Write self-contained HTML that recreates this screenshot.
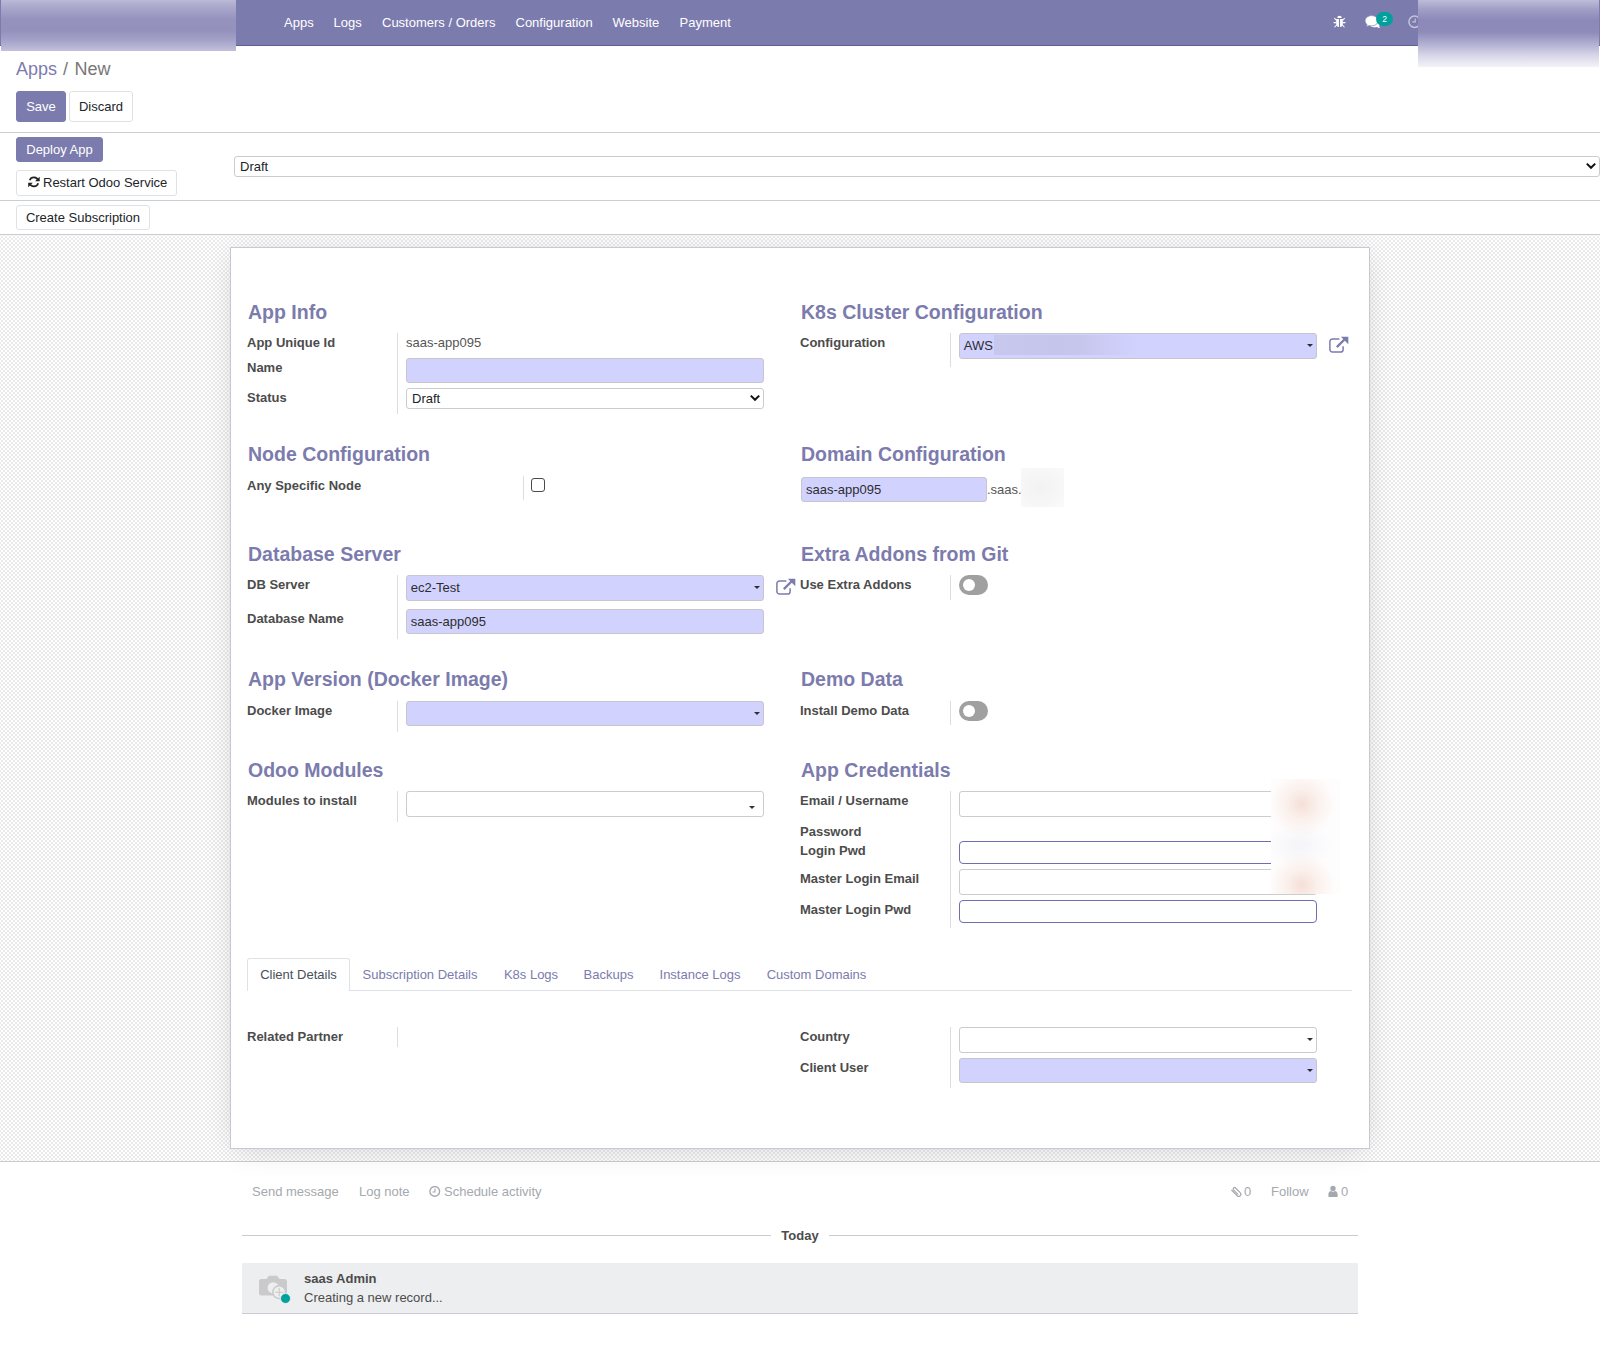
<!DOCTYPE html>
<html lang="en">
<head>
<meta charset="utf-8">
<title>Apps / New</title>
<style>
*{box-sizing:border-box}
html,body{margin:0;padding:0}
body{width:1600px;height:1367px;position:relative;overflow:hidden;background:#fff;
 font-family:"Liberation Sans",sans-serif;font-size:13px;line-height:19.5px;color:#666}
a{text-decoration:none;color:#7c7bad}
.abs{position:absolute}

/* ---------- navbar ---------- */
.navbar{position:absolute;left:0;top:0;width:1600px;height:46px;background:#7c7bad;border-bottom:1px solid #5f5e97;color:#fff}
.navbar .menu a{position:absolute;top:0;display:block;color:#fff;line-height:45px;height:45px;font-size:13px;white-space:nowrap}
.blurL{z-index:10;position:absolute;left:1px;top:0;width:235px;height:51px;
 background:linear-gradient(to bottom,#bcbad6 0,#aaa8cc 14%,#9592be 38%,#9491bd 60%,#a5a3c9 80%,#c2c0db 100%)}
.blurR{z-index:10;position:absolute;left:1418px;top:0;width:181px;height:67px;
 background:linear-gradient(to bottom,#bebcd8 0,#a19ec6 14%,#8c89b8 30%,#8e8bba 48%,#aeacd0 64%,#d6d5e7 82%,#f3f3f8 100%)}
.systray{position:absolute;top:0;height:45px}

/* ---------- control panel ---------- */
.cp{position:absolute;left:0;top:46px;width:1600px;height:87px;border-bottom:1px solid #cacdd2;background:#fff}
.breadcrumb{position:absolute;left:16px;top:10px;font-size:18px;line-height:27px;color:#777;white-space:nowrap}
.breadcrumb a{color:#7c7bad}
.breadcrumb .sep{color:#777;padding:0 6.500px 0 6px}
button{font-family:inherit;margin:0}
h2{margin:0}
.btn{position:absolute;display:block;border:1px solid #dee2e6;border-radius:3px;background:#fff;color:#212529;
 font-size:13px;line-height:19px;text-align:center;white-space:nowrap;padding:0}
.btn.pri{background:#7c7bad;border-color:#7c7bad;color:#fff}

/* ---------- status bar ---------- */
.sb{position:absolute;left:0;top:133px;width:1600px;height:102px;background:#fff;border-bottom:1px solid #cacdd2}
.sb .mid{position:absolute;left:0;top:67px;width:1600px;height:1px;background:#cacdd2}
.sel{position:absolute;border:1px solid #ccc;border-radius:3px;background:#fff;color:#212529;font-size:13px;line-height:19px;padding:0 0 0 5px;white-space:nowrap}
.sel svg{position:absolute;right:2px;top:4.600px}

/* ---------- sheet ---------- */
.sheetbg{position:absolute;left:0;top:235px;width:1600px;height:927px;border-bottom:1px solid #ccc;
 background-color:#fff;
 background-image:conic-gradient(#ebebeb 25%,#fefefe 0 50%,#ebebeb 0 75%,#fefefe 0);background-position:-1px 1px;
 background-size:4px 4px}
.sheet{position:absolute;left:230px;top:247px;width:1140px;height:902px;background:#fff;border:1px solid #c8c8d3;
 box-shadow:0 4px 30px -6px rgba(0,0,0,.16)}

/* ---------- sheet content ---------- */
.h2{position:absolute;font-size:19.5px;font-weight:bold;color:#7c7bad;line-height:24px;white-space:nowrap;margin:0}
.lbl{position:absolute;font-weight:bold;color:#4c4c4c;font-size:13px;line-height:19px;white-space:nowrap}
.val{position:absolute;color:#555;font-size:13px;line-height:19px;white-space:nowrap}
.vsep{position:absolute;width:1px;background:#ddd}
.inp{position:absolute;border:1px solid #ccc;border-radius:3px;background:#fff;color:#2d2d2d;font-size:13px;line-height:19px;padding:2px 0 0 3.700px;white-space:nowrap}
.inp.req{background:#d2d2ff;border-color:#c6c6cc}
.inp.pwd{border-color:#6f6eb0;border-radius:4px}
.caret{position:absolute;right:3px;top:10px;width:0;height:0;border-left:3px solid transparent;border-right:3px solid transparent;border-top:3px solid #2f2f2f}
.tog{position:absolute;width:29px;height:20px;border-radius:10px;background:#a0a0a0}
.tog i{position:absolute;left:4px;top:4px;width:12px;height:12px;border-radius:6px;background:#fff}
.chk{position:absolute;width:14px;height:14px;border:1.3px solid #4a4a4a;border-radius:3px;background:#fff}
.ext{position:absolute;width:20px;height:19px}

.blurtxt{position:absolute;left:34px;top:1px;width:145px;height:20px;background:linear-gradient(to right,#c8c8ef 0,#c5c5ec 45%,#c7c7ee 62%,#cdcdf7 82%,#d2d2ff 100%)}
.blurdom{position:absolute;left:1021px;top:468px;width:43px;height:39px;background:radial-gradient(ellipse at 45% 50%,#f2f2f2 0,#f6f6f6 55%,#fafafa 100%)}
.blurpw{position:absolute;left:1271px;top:779px;width:69px;height:115px;background:
 radial-gradient(ellipse 33px 33px at 31px 25px,#f5dfd6 0,rgba(249,234,228,.7) 45%,rgba(253,250,249,0) 100%),
 radial-gradient(ellipse 33px 33px at 31px 106px,#f5dfd6 0,rgba(249,234,228,.7) 45%,rgba(253,250,249,0) 100%),
 radial-gradient(ellipse 34px 22px at 28px 66px,#f4f4f9 0,rgba(250,250,252,0) 100%),#fefdfd}

/* ---------- notebook ---------- */
.tabline{position:absolute;height:1px;background:#dee2e6}
.tab{position:absolute;height:33px;line-height:31px;text-align:center;color:#7c7bad;font-size:13px;white-space:nowrap;border:1px solid transparent;border-bottom:none}
.tab.act{color:#495057;background:#fff;border-color:#dee2e6;border-radius:3px 3px 0 0}
/* ---------- chatter ---------- */
.ct{position:absolute;top:1182px;color:#a5a8ad;font-size:13px;line-height:19px;white-space:nowrap}
.hr{position:absolute;height:1px;background:#c9ccd2}
.today{position:absolute;left:771px;top:1226px;width:58px;text-align:center;font-weight:bold;color:#4c4c4c;font-size:13px;line-height:19px}
.msg{position:absolute;left:242px;top:1263px;width:1116px;height:51px;background:#edeef0;border-bottom:1px solid #c9ccd2}
.msg .who{position:absolute;left:62px;top:6px;font-weight:bold;color:#4c4c4c;line-height:19px}
.msg .txt{position:absolute;left:62px;top:25px;color:#4c4c4c;line-height:19px}
.msg .dot{position:absolute;left:38px;top:30px;width:11px;height:11px;border-radius:6px;background:#00a09d;border:1px solid #edeef0}

.badge{position:absolute;left:1376px;top:11.500px;width:17px;height:14.500px;border-radius:7.250px;background:#00a09d;color:#fff;font-size:8.500px;line-height:14px;text-align:center}
</style>
</head>
<body>

<div class="sheetbg"></div>
<div class="sheet" id="sheet"></div>


<div id="form">
<!-- ===== left column ===== -->
<h2 class="h2" style="left:248px;top:300px">App Info</h2>
<div class="vsep" style="left:397px;top:333px;height:81px"></div>
<label class="lbl" style="left:247px;top:333px">App Unique Id</label>
<div class="val" style="left:406px;top:333px">saas-app095</div>
<label class="lbl" style="left:247px;top:358px">Name</label>
<div class="inp req" style="left:406px;top:358px;width:358px;height:25px"></div>
<label class="lbl" style="left:247px;top:388px">Status</label>
<div class="sel" style="left:406px;top:388px;width:358px;height:21px">Draft<svg width="12" height="8" viewBox="0 0 12 8"><path d="M1.800 1.600 L6 5.800 L10.200 1.600" fill="none" stroke="#111" stroke-width="2"/></svg></div>

<h2 class="h2" style="left:248px;top:442px">Node Configuration</h2>
<div class="vsep" style="left:523px;top:476px;height:24px"></div>
<label class="lbl" style="left:247px;top:476px">Any Specific Node</label>
<div class="chk" style="left:531px;top:478px"></div>

<h2 class="h2" style="left:248px;top:542px">Database Server</h2>
<div class="vsep" style="left:397px;top:575px;height:64px"></div>
<label class="lbl" style="left:247px;top:575px">DB Server</label>
<div class="inp req" style="left:406px;top:575px;width:358px;height:26px">ec2-Test<span class="caret"></span></div>
<label class="lbl" style="left:247px;top:609px">Database Name</label>
<div class="inp req" style="left:406px;top:609px;width:358px;height:25px">saas-app095</div>

<h2 class="h2" style="left:248px;top:667px">App Version (Docker Image)</h2>
<div class="vsep" style="left:397px;top:701px;height:31px"></div>
<label class="lbl" style="left:247px;top:701px">Docker Image</label>
<div class="inp req" style="left:406px;top:701px;width:358px;height:25px"><span class="caret"></span></div>

<h2 class="h2" style="left:248px;top:758px">Odoo Modules</h2>
<div class="vsep" style="left:397px;top:791px;height:31px"></div>
<label class="lbl" style="left:247px;top:791px">Modules to install</label>
<div class="inp" style="left:406px;top:791px;width:358px;height:26px"><span class="caret" style="right:8px;top:14px"></span></div>

<!-- ===== right column ===== -->
<h2 class="h2" style="left:801px;top:300px">K8s Cluster Configuration</h2>
<div class="vsep" style="left:950px;top:333px;height:34px"></div>
<label class="lbl" style="left:800px;top:333px">Configuration</label>
<div class="inp req" style="left:959px;top:333px;width:358px;height:26px">AWS<span class="blurtxt"></span><span class="caret"></span></div>
<svg class="ext" style="left:1329px;top:336px" viewBox="0 0 20 19"><path d="M10.400 2.900H3.500a2.600 2.600 0 0 0-2.600 2.600v8a2.600 2.600 0 0 0 2.600 2.600h8a2.600 2.600 0 0 0 2.600-2.600V10.200" fill="none" stroke="#7c7bad" stroke-width="1.5"/><path d="M7.800 11.100L16.200 2.700" fill="none" stroke="#7c7bad" stroke-width="2.3"/><path d="M11.900 .800h7.400v7.400z" fill="#7c7bad"/></svg>

<h2 class="h2" style="left:801px;top:442px">Domain Configuration</h2>
<div class="inp req" style="left:801px;top:477px;width:186px;height:25px;padding-left:4px">saas-app095</div>
<div class="val" style="left:987px;top:480px">.saas.</div>
<div class="blurdom"></div>

<h2 class="h2" style="left:801px;top:542px">Extra Addons from Git</h2>
<div class="vsep" style="left:950px;top:575px;height:25px"></div>
<label class="lbl" style="left:800px;top:575px">Use Extra Addons</label>
<div class="tog" style="left:959px;top:575px"><i></i></div>
<svg class="ext" style="left:776px;top:578px" viewBox="0 0 20 19"><path d="M10.400 2.900H3.500a2.600 2.600 0 0 0-2.600 2.600v8a2.600 2.600 0 0 0 2.600 2.600h8a2.600 2.600 0 0 0 2.600-2.600V10.200" fill="none" stroke="#7c7bad" stroke-width="1.5"/><path d="M7.800 11.100L16.200 2.700" fill="none" stroke="#7c7bad" stroke-width="2.3"/><path d="M11.900 .800h7.400v7.400z" fill="#7c7bad"/></svg>

<h2 class="h2" style="left:801px;top:667px">Demo Data</h2>
<div class="vsep" style="left:950px;top:701px;height:24px"></div>
<label class="lbl" style="left:800px;top:701px">Install Demo Data</label>
<div class="tog" style="left:959px;top:701px"><i></i></div>

<h2 class="h2" style="left:801px;top:758px">App Credentials</h2>
<div class="vsep" style="left:950px;top:791px;height:137px"></div>
<label class="lbl" style="left:800px;top:791px">Email / Username</label>
<div class="inp" style="left:959px;top:791px;width:358px;height:26px"></div>
<label class="lbl" style="left:800px;top:822px">Password</label>
<label class="lbl" style="left:800px;top:841px">Login Pwd</label>
<div class="inp pwd" style="left:959px;top:841px;width:358px;height:23px"></div>
<label class="lbl" style="left:800px;top:869px">Master Login Email</label>
<div class="inp" style="left:959px;top:869px;width:358px;height:26px"></div>
<label class="lbl" style="left:800px;top:900px">Master Login Pwd</label>
<div class="inp pwd" style="left:959px;top:900px;width:358px;height:23px"></div>
<div class="blurpw"></div>

<!-- ===== notebook ===== -->
<div class="tabline" style="left:247px;top:990px;width:1105px"></div>
<a class="tab act" style="left:247px;top:958px;width:103px">Client Details</a>
<a class="tab" style="left:350px;top:958px;width:140px">Subscription Details</a>
<a class="tab" style="left:491px;top:958px;width:80px">K8s Logs</a>
<a class="tab" style="left:571px;top:958px;width:75px">Backups</a>
<a class="tab" style="left:647px;top:958px;width:106px">Instance Logs</a>
<a class="tab" style="left:754px;top:958px;width:125px">Custom Domains</a>

<div class="vsep" style="left:397px;top:1027px;height:20px"></div>
<label class="lbl" style="left:247px;top:1027px">Related Partner</label>
<div class="vsep" style="left:950px;top:1027px;height:61px"></div>
<label class="lbl" style="left:800px;top:1027px">Country</label>
<div class="inp" style="left:959px;top:1027px;width:358px;height:26px"><span class="caret"></span></div>
<label class="lbl" style="left:800px;top:1058px">Client User</label>
<div class="inp req" style="left:959px;top:1058px;width:358px;height:25px"><span class="caret"></span></div>
<!-- NOTEBOOK-END -->


</div>


<!-- ===== chatter ===== -->
<div id="chatter">
<div class="ct" style="left:252px">Send message</div>
<div class="ct" style="left:359px">Log note</div>
<svg class="abs" style="left:429px;top:1186px" width="12" height="12" viewBox="0 0 12 12"><circle cx="5.75" cy="5.4" r="4.85" fill="none" stroke="#a5a8ad" stroke-width="1.35"/><path d="M6 2.6V6H3.4" fill="none" stroke="#a5a8ad" stroke-width="1.1"/></svg>
<div class="ct" style="left:444px">Schedule activity</div>
<svg class="abs" style="left:1228.500px;top:1184.500px" width="15" height="14" viewBox="0 0 14 13"><g transform="rotate(-45 7 6.5)"><path d="M5 2.2v7.2a2 2 0 0 0 4 0V3.2a1.3 1.3 0 0 0-2.6 0v5.6" fill="none" stroke="#a5a8ad" stroke-width="1.1" stroke-linecap="round"/></g></svg>
<div class="ct" style="left:1244px">0</div>
<div class="ct" style="left:1271px">Follow</div>
<svg class="abs" style="left:1328px;top:1185px" width="10" height="12" viewBox="0 0 10 12"><circle cx="5" cy="3.4" r="2.7" fill="#a5a8ad"/><path d="M0.4 11.6V9.2c0-1.9 1.2-3 2.6-3.2.6.5 1.2.8 2 .8s1.4-.3 2-.8c1.4.2 2.6 1.3 2.6 3.2v2.4c0 .2-.2.3-.4.3H.8c-.2 0-.4-.1-.4-.3z" fill="#a5a8ad"/></svg>
<div class="ct" style="left:1341px">0</div>
<div class="hr" style="left:242px;top:1235px;width:529px"></div>
<div class="hr" style="left:829px;top:1235px;width:529px"></div>
<div class="today">Today</div>
<div class="msg">
  <svg class="abs" style="left:14px;top:5px" width="36" height="36" viewBox="0 0 36 36">
    <path d="M5.3 11h5.2l2.4-3.2h8.2L23.5 11h5.2a2.3 2.3 0 0 1 2.3 2.3v12a2.3 2.3 0 0 1-2.3 2.3H5.3A2.3 2.3 0 0 1 3 25.300V13.300A2.300 2.300 0 0 1 5.300 11z" fill="#cacaca"/>
    <circle cx="17.2" cy="19.800" r="5.6" fill="#edeef0"/>
    <circle cx="23.2" cy="24.200" r="6.400" fill="#edeef0" stroke="#cacaca" stroke-width="1.500"/>
    <path d="M23.200 20.100v8.200M19.100 24.200h8.200" stroke="#cacaca" stroke-width="1.100" fill="none"/>
  </svg>
  <div class="who">saas Admin</div>
  <div class="txt">Creating a new record...</div>
  <div class="dot"></div>
</div>
</div>

<nav class="navbar">
  
  <svg class="abs" style="left:1332.700px;top:15.200px" width="13" height="13" viewBox="0 0 14 14"><path d="M4.600 3.200a2.400 2.400 0 0 1 4.800 0z" fill="#fff"/><path d="M3.400 4.300h3v8.600c-1.800-.1-3-1.300-3-3.200zM7.600 4.300h3v5.400c0 1.900-1.200 3.100-3 3.200z" fill="#fff"/><path d="M3.500 5.400L1.400 3.300M3.400 8.200H.600M3.800 11L1.600 13.200M10.500 5.400l2.100-2.100M10.600 8.200h2.800M10.200 11l2.200 2.200" stroke="#fff" stroke-width="1.100" fill="none"/></svg>
  <svg class="abs" style="left:1364px;top:14px" width="18" height="16" viewBox="0 0 18 16"><path d="M10.600 5.600c3.100 0 5.700 1.700 5.700 3.900 0 1-.500 1.800-1.400 2.500l1.300 2c-1.300 0-2.400-.400-3.300-1-.700.200-1.500.300-2.300.300-3.100 0-5.700-1.700-5.700-3.800s2.600-3.900 5.700-3.900z" fill="#fff"/><path d="M7.600 1.600c3.600 0 6.500 2.300 6.500 5.150s-2.900 5.150-6.500 5.150c-.800 0-1.600-.100-2.300-.300-.900.700-2.100 1-3.300 1.100.600-.600 1-1.200 1.200-2C1.900 9.800 1.100 8.400 1.100 6.750c0-2.850 2.900-5.150 6.500-5.150z" fill="#fff" stroke="#7c7bad" stroke-width=".700"/></svg>
  <div class="badge">2</div>
  <svg class="abs" style="left:1407px;top:14px" width="16" height="16" viewBox="0 0 16 16"><circle cx="7.600" cy="7.700" r="5.700" fill="none" stroke="#c6c5dc" stroke-width="1.500"/><path d="M8.300 4.400v3.500H5.300" fill="none" stroke="#c6c5dc" stroke-width="1.100"/></svg>
  <div class="menu">
    <a style="left:284px">Apps</a><a style="left:333.5px">Logs</a><a style="left:382px">Customers / Orders</a><a style="left:515.5px">Configuration</a><a style="left:612.5px">Website</a><a style="left:679.5px">Payment</a>
  </div>
</nav>
<div class="blurL"></div>
<div class="blurR"></div>

<div class="cp">
  <div class="breadcrumb"><a>Apps</a><span class="sep">/</span><span>New</span></div>
  <button type="button" class="btn pri" style="left:16px;top:45px;width:50px;height:31px;line-height:29px">Save</button>
  <button type="button" class="btn" style="left:69px;top:45px;width:64px;height:31px;line-height:29px">Discard</button>
</div>

<div class="sb">
  <button type="button" class="btn pri" style="left:16px;top:4px;width:87px;height:25px;line-height:23px">Deploy App</button>
  <button type="button" class="btn" style="left:16px;top:37px;width:161px;height:26px;line-height:24px;text-align:left;padding-left:26px"><svg class="abs" style="left:11.400px;top:5.400px" width="12" height="12" viewBox="0 0 12 12"><path d="M10.200 4.600A4.500 4.500 0 0 0 1.700 4.300M1.700 7.500a4.500 4.500 0 0 0 8.500-.300" fill="none" stroke="#222" stroke-width="1.700"/><path d="M11.700 .700v4.600H7.100zM.200 11.300V6.700h4.600z" fill="#222"/></svg>Restart Odoo Service</button>
  <div class="mid"></div>
  <button type="button" class="btn" style="left:16px;top:72px;width:134px;height:25px;line-height:23px">Create Subscription</button>
  <div class="sel" style="left:234px;top:23px;width:1366px;height:21px">Draft<svg width="12" height="8" viewBox="0 0 12 8"><path d="M1.800 1.600 L6 5.800 L10.200 1.600" fill="none" stroke="#111" stroke-width="2"/></svg></div>
</div>

</body>
</html>
